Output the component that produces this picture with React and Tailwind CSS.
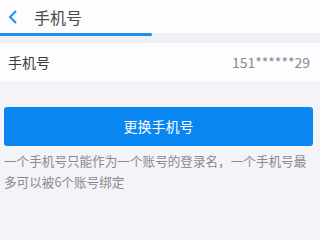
import React from 'react';

const font = { fontFamily: '"Noto Sans CJK SC", "Noto Sans", sans-serif' };

export default function App() {
  return (
    <div className="w-[320px] h-[240px] bg-[#f3f3f8] overflow-hidden" style={font}>
      {/* 顶部栏 */}
      <div className="h-[33px] bg-[#fdfcfe] flex items-center">
        <svg className="ml-[7px] w-[12px] h-[16px]" viewBox="0 0 12 16">
          <path d="M9 2 L3 8 L9 14" fill="none" stroke="#1e8ef0" strokeWidth="2" />
        </svg>
        <span className="ml-[15px] text-[16px] text-[#4a4a4a] leading-none">手机号</span>
      </div>
      {/* 进度条 */}
      <div className="h-[3px] bg-[#eef0f5]">
        <div className="h-full w-[152px] bg-[#1a90f0] rounded-r-full"></div>
      </div>
      <div className="h-[7px] bg-[#eff0f5]"></div>

      {/* 手机号行 */}
      <div className="h-[38px] bg-[#fdfcfe] flex items-center justify-between pl-[8px] pr-[10px]">
        <span className="text-[14px] text-[#3a3a3a]">手机号</span>
        <span className="text-[14px] text-[#8a8a8a]">151******29</span>
      </div>

      <div className="px-[4px] pt-[26px]">
        <button className="w-[309px] h-[39px] rounded-[3px] bg-[#0a86f0] text-white text-[14px]">
          更换手机号
        </button>
        <p className="mt-[4px] text-[12.6px] leading-[21px] text-[#8a8a8e]">
          一个手机号只能作为一个账号的登录名，一个手机号最多可以被6个账号绑定
        </p>
      </div>
    </div>
  );
}
